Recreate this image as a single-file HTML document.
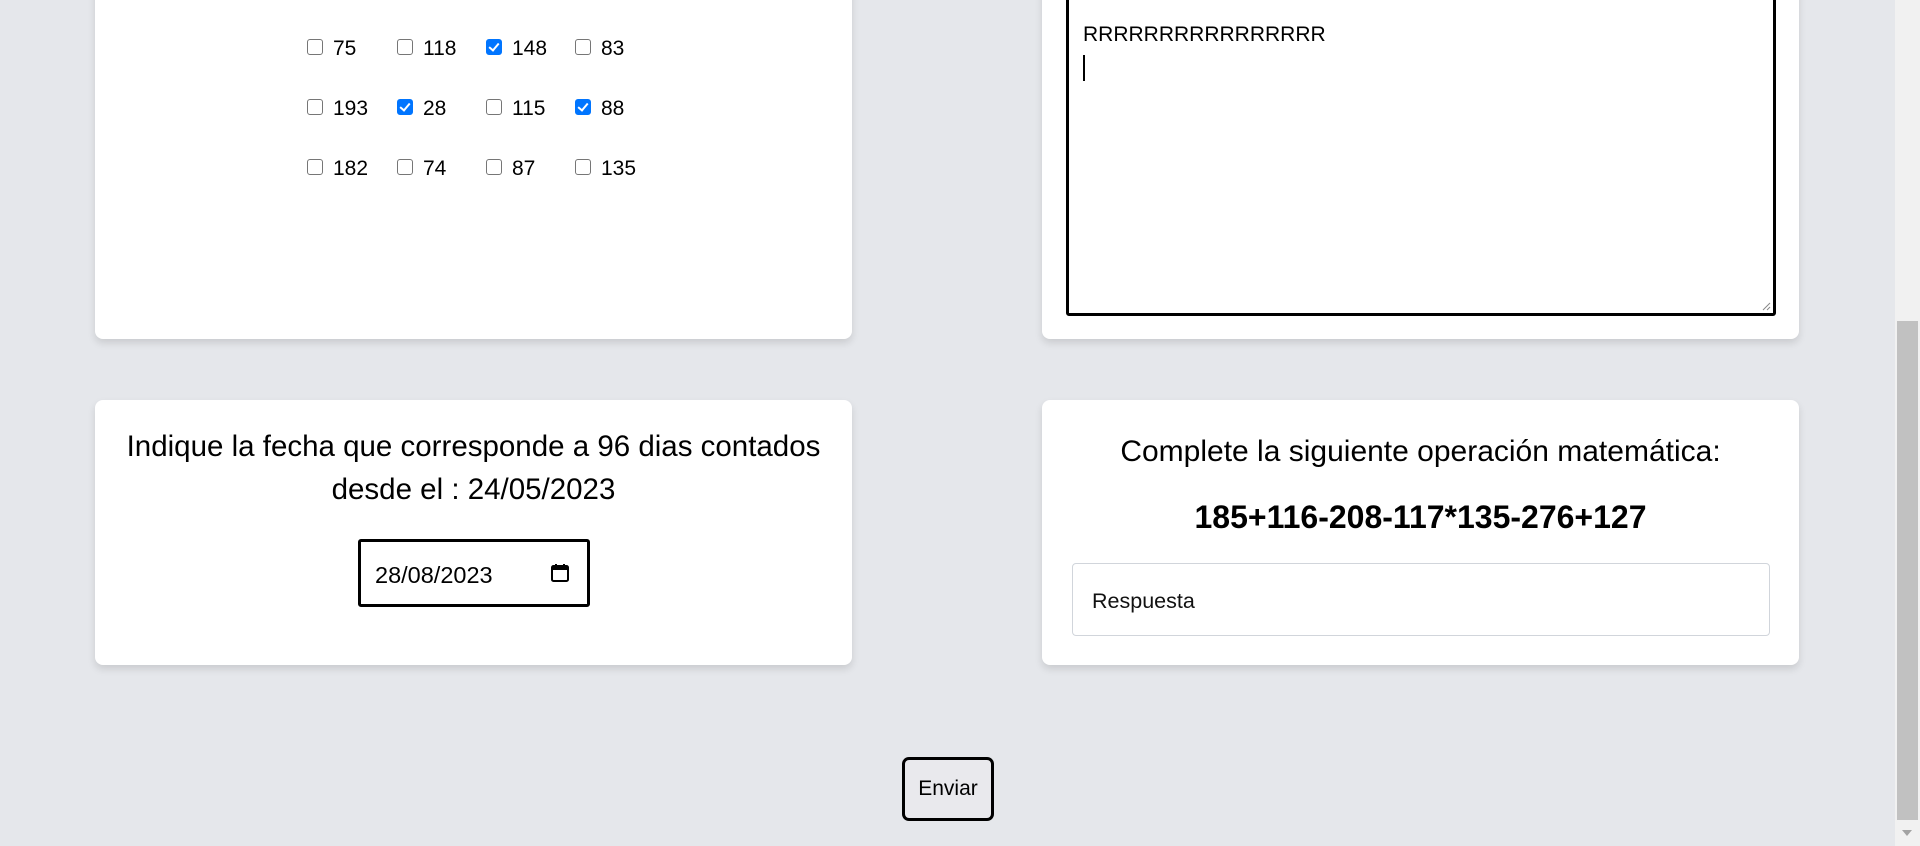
<!DOCTYPE html>
<html><head><meta charset="utf-8"><style>
*{box-sizing:border-box;margin:0;padding:0}
html,body{width:1920px;height:846px;overflow:hidden;background:#e5e7eb;font-family:"Liberation Sans",sans-serif;color:#000}
.card{position:absolute;background:#fff;border-radius:8px;box-shadow:0 4px 8px rgba(0,0,0,.12)}
.cb{position:absolute;width:16px;height:16px;border:1.5px solid #767676;border-radius:3px;background:#fff}
.cb.on{background:#0075ff;border-color:#0075ff}
.cb.on:after{content:"";position:absolute;left:4px;top:1px;width:4px;height:8px;border:solid #fff;border-width:0 2px 2px 0;transform:rotate(40deg)}
.lbl{position:absolute;font-size:21px;line-height:21px}
.t{position:absolute;text-align:center;white-space:nowrap}
</style></head><body>
<div class="card" style="left:95px;top:-20px;width:757px;height:359px"></div>
<div class="card" style="left:1042px;top:-20px;width:757px;height:359px"></div>
<div class="card" style="left:95px;top:400px;width:757px;height:265px"></div>
<div class="card" style="left:1042px;top:400px;width:757px;height:265px"></div>

<div class="cb" style="left:307px;top:39px"></div><div class="lbl" style="left:333px;top:38px">75</div>
<div class="cb" style="left:397px;top:39px"></div><div class="lbl" style="left:423px;top:38px">118</div>
<div class="cb on" style="left:486px;top:39px"></div><div class="lbl" style="left:512px;top:38px">148</div>
<div class="cb" style="left:575px;top:39px"></div><div class="lbl" style="left:601px;top:38px">83</div>

<div class="cb" style="left:307px;top:99px"></div><div class="lbl" style="left:333px;top:98px">193</div>
<div class="cb on" style="left:397px;top:99px"></div><div class="lbl" style="left:423px;top:98px">28</div>
<div class="cb" style="left:486px;top:99px"></div><div class="lbl" style="left:512px;top:98px">115</div>
<div class="cb on" style="left:575px;top:99px"></div><div class="lbl" style="left:601px;top:98px">88</div>

<div class="cb" style="left:307px;top:159px"></div><div class="lbl" style="left:333px;top:158px">182</div>
<div class="cb" style="left:397px;top:159px"></div><div class="lbl" style="left:423px;top:158px">74</div>
<div class="cb" style="left:486px;top:159px"></div><div class="lbl" style="left:512px;top:158px">87</div>
<div class="cb" style="left:575px;top:159px"></div><div class="lbl" style="left:601px;top:158px">135</div>

<div style="position:absolute;left:1066px;top:-4px;width:710px;height:320px;border:3px solid #000;border-radius:3px;background:#fff">
<div style="position:absolute;left:14px;top:24px;font-size:21px">RRRRRRRRRRRRRRRR</div>
<div style="position:absolute;left:14px;top:56px;width:1.5px;height:26px;background:#000"></div>
<svg style="position:absolute;right:2px;bottom:2px" width="10" height="10"><path d="M9 2L2 9M9 6L6 9" stroke="#888" stroke-width="1"/></svg>
</div>

<div class="t" style="left:95px;width:757px;top:425px;line-height:43px;font-size:29.5px">Indique la fecha que corresponde a 96 dias contados<br>desde el : 24/05/2023</div>
<div style="position:absolute;left:358px;top:539px;width:232px;height:68px;border:3px solid #000;border-radius:3px;background:#fff">
<div style="position:absolute;left:14px;top:20px;font-size:23.5px">28/08/2023</div>
<svg style="position:absolute;left:189px;top:21px" width="20" height="20" viewBox="0 0 20 20"><rect x="2" y="3" width="16" height="15" rx="1.5" fill="none" stroke="#000" stroke-width="2"/><rect x="2" y="3" width="16" height="4" fill="#000"/><path d="M6 1v3M14 1v3" stroke="#000" stroke-width="2"/></svg>
</div>

<div class="t" style="left:1042px;width:757px;top:435px;font-size:30px">Complete la siguiente operación matemática:</div>
<div class="t" style="left:1042px;width:757px;top:499px;font-size:32px;font-weight:bold">185+116-208-117*135-276+127</div>
<div style="position:absolute;left:1072px;top:563px;width:698px;height:73px;border:1px solid #d1d5db;border-radius:4px;background:#fff">
<div style="position:absolute;left:19px;top:25px;font-size:21.5px;color:#111">Respuesta</div>
</div>

<div style="position:absolute;left:902px;top:757px;width:92px;height:64px;border:3px solid #000;border-radius:7px;background:#e9e9ed;font-size:21px;text-align:center;line-height:58px">Enviar</div>

<div style="position:absolute;left:1895px;top:0;width:25px;height:846px;background:#f1f1f1"></div>
<div style="position:absolute;left:1897px;top:321px;width:21px;height:499px;background:#c1c1c1"></div>
<svg style="position:absolute;left:1901px;top:828px" width="12" height="10"><path d="M1 2h10L6 8z" fill="#a3a3a3"/></svg>
</body></html>
